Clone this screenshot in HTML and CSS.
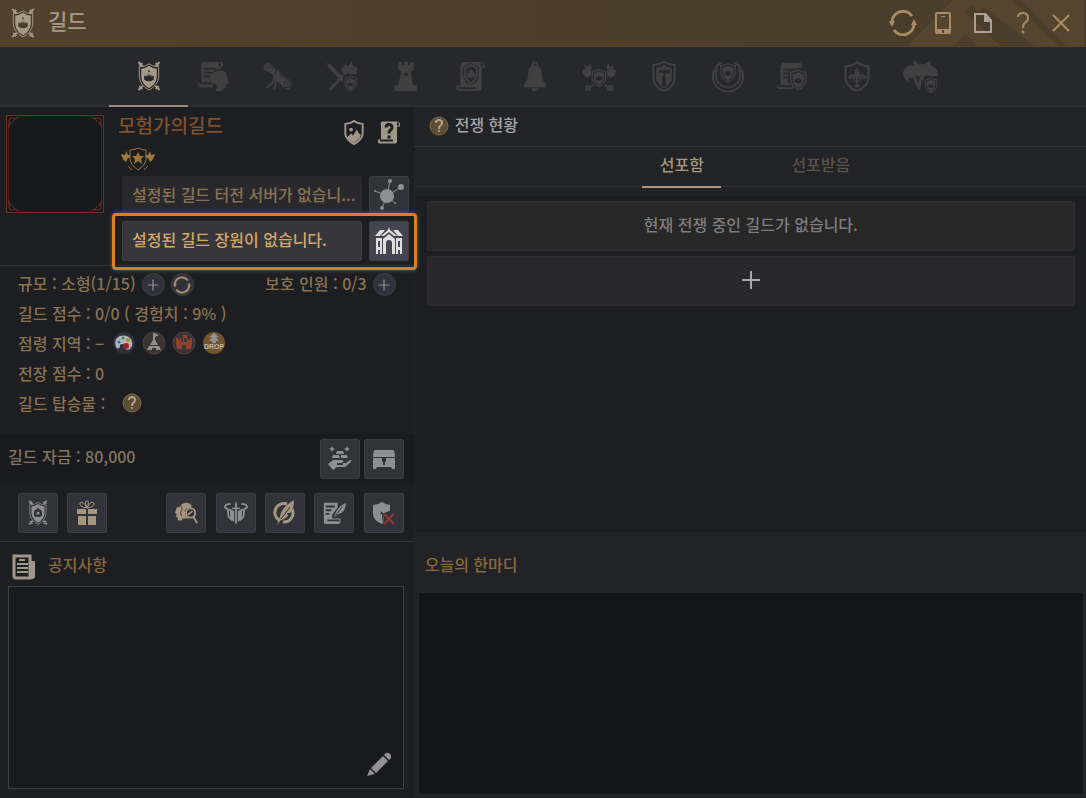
FILE: index.html
```
<!DOCTYPE html>
<html lang="ko">
<head>
  <meta charset="UTF-8">
  <title>길드</title>
  <meta name="viewport" content="width=device-width, initial-scale=1">
  <link rel="stylesheet" href="styles.css">
</head>
<body>
  <svg class="sprite" aria-hidden="true">
    <symbol id="shield" viewBox="0 0 24 28">
      <path class="line" d="M12 1Q8 4 2 4V14Q3 22 12 27Q21 22 22 14V4Q16 4 12 1Z"/>
      <path d="M12 4Q8 6.5 4.500 6.5V14Q5.500 20.5 12 24.500Q18.500 20.5 19.500 14V6.5Q16 6.5 12 4Z"/>
    </symbol>
    <symbol id="shield-crown" viewBox="0 0 24 28">
      <use href="#shield" width="24" height="28"/>
      <path class="cut" d="M7 12l2 2 1-3 1.5 2L12 10l.5 3 1.5-2 1 3 2-2-.5 5q-4.500 2-9 0z"/>
    </symbol>
    <symbol id="guild" viewBox="0 0 24 32">
      <path class="line" d="M1 1l5 5M2 5l3-3M23 1l-5 5M22 5l-3-3M1 30l5-5M2 26l3 3M23 30l-5-5M22 26l-3 3"/>
      <path class="cut" d="M12 1Q8 5 2 6V17Q3 26 12 32Q21 26 22 17V6Q16 5 12 1Z"/>
      <path class="line thin" d="M12 3Q8 6 2 6V17Q3 25 12 30Q21 25 22 17V6Q16 6 12 3Z"/>
      <path d="M12 5Q8 8 4 8V17Q5 24 12 28Q19 24 20 17V8Q16 8 12 5Z"/>
      <path class="cut" d="M7 15l2 1 1-2 1 2 1-3 1 3 1-2 1 2 2-1v4q-5 4-10 0zM12 9l1 1.5-1 1.5-1-1.5z"/>
    </symbol>
    <symbol id="member" viewBox="0 0 32 32">
      <path d="M6 1h19q3 1 1 5H7v16h9v5H4q-4 0-4-5h4V5q0-4 2-4z"/>
      <path d="M7 5h17v18H7z"/>
      <path class="cut-line" d="M7 8h12M7 12h9M7 16h6M2 23h13M23 2v3"/>
      <path class="cut" d="M17 11q6-5 13-2l2 20-8 3-6-2z"/>
      <path d="M23 10q6-1 7 4 0 2 1 4l1 4q0 2-2 2l-1 4-3 1v2h-7l1-5q-6-4-5-9 1-7 8-7z"/>
    </symbol>
    <symbol id="scroll-roll" viewBox="0 0 32 32">
      <path d="M1 8q0-6 6-6l7 7-3 6-10-6zM15 10l15 11q2 7-5 9L11 17z"/>
      <path class="cut-line thin" d="M1 9l9 5M6 4l6 5M18 14l9 6"/>
      <circle class="cut" cx="26" cy="24" r="4"/>
      <circle class="line" cx="26" cy="24" r="2"/>
      <path class="line" d="M17 9l-6 8M12 15q2 6-8 13M12 16q3 7 0 13"/>
    </symbol>
    <symbol id="war" viewBox="0 0 32 32">
      <path d="M0 2l4 1 17 18-2 3L3 8zM2 29l18-19 2 2L4 31zM15 8l5-5 2 3 4-6 1 5 5 2-1 6-7 2-3-5-4 3z"/>
      <path class="cut" d="M17 14h15v18H17z"/>
      <use href="#shield-crown" x="18" y="15" width="14" height="17"/>
    </symbol>
    <symbol id="tower" viewBox="0 0 24 32">
      <path d="M4 1h4v3h2V1h4v3h2V1h4v8l-3 2 2 14h4v6H0v-6h4l3-14-3-2z"/>
      <circle class="cut" cx="12" cy="14" r="2"/>
    </symbol>
    <symbol id="charter" viewBox="0 0 32 32">
      <path d="M7 1h20q4 0 3 6h-3v20q0 4-4 4H4q-4 0-3-6h4V5q0-3 2-4z"/>
      <path class="cut-line" d="M3 28h18M27 2v4"/>
      <path class="cut" d="M16 2l8 4v10q-1 6-8 9-7-3-8-9V6z"/>
      <path class="line" d="M16 4l6 3v8q-1 5-6 8-5-3-6-8V7z"/>
      <path d="M12 12l2 1v-2l2-3 2 3v2l2-1v5h-8z"/>
    </symbol>
    <symbol id="bell" viewBox="0 0 24 32">
      <circle class="line" cx="12" cy="4" r="2.500"/>
      <path d="M12 5q7 0 7 8 0 8 4 10v4H1v-4q4-2 4-10 0-8 7-8zM8 28h8q-1 3-4 3t-4-3z"/>
    </symbol>
    <symbol id="axes" viewBox="0 0 36 32">
      <path d="M1 9q6-1 8-7l3 9-5 6q-6-2-6-8zM35 9q-6-1-8-7l-3 9 5 6q6-2 6-8z"/>
      <path class="line" d="M4 5l6 6M32 5l-6 6M12 24l-5 4M24 24l5 4"/>
      <circle class="line" cx="7" cy="27" r="2"/>
      <circle class="line" cx="29" cy="27" r="2"/>
      <path class="cut" d="M10 7h16v14l-8 6-8-6z"/>
      <use href="#shield-crown" x="10" y="7" width="16" height="20"/>
    </symbol>
    <symbol id="hammer" viewBox="0 0 24 32">
      <path class="line" d="M12 1Q7 4 1 4V18Q2 27 12 31Q22 27 23 18V4Q17 4 12 1Z"/>
      <path d="M12 4Q8 7 4 7V18Q5 24 12 28Q19 24 20 18V7Q16 7 12 4Z"/>
      <path class="cut" d="M7 9h11v4h-4l-1 2h-2v-3H6zM10 16h4v10h-4z"/>
    </symbol>
    <symbol id="aura" viewBox="0 0 36 36">
      <path class="line" d="M11 3A16 16 0 1 0 25 3"/>
      <path class="line" d="M7 9a13 13 0 1 0 22 0"/>
      <use href="#shield-crown" x="9" y="2" width="18" height="23"/>
    </symbol>
    <symbol id="scroll-shield" viewBox="0 0 32 32">
      <path d="M6 2h19q3 2 1 6H8v17h9v4H4q-4 0-4-4h4V6q0-3 2-4z"/>
      <path d="M6 7h10v18H6z"/>
      <path class="cut-line" d="M7 9h9M7 13h5M7 17h5M2 26h14"/>
      <path class="cut" d="M22 7h10v22l-9 2-11-9V11z"/>
      <use href="#shield-crown" x="13" y="8" width="19" height="23"/>
    </symbol>
    <symbol id="lily" viewBox="0 0 24 30">
      <path class="line" d="M12 1Q8 5 1 5V17Q2 25 12 29Q22 25 23 17V5Q16 5 12 1Z"/>
      <path d="M12 6q5 6 1 11v2h3v1h-3v2l2 2-3 2-3-2 2-2v-2H8v-1h3v-2q-4-5 1-11zM10 18q0-6-4-5-4 2-1 5l2-1q-2-1 0-2 1 0 1 3zM14 18q0-6 4-5 4 2 1 5l-2-1q2-1 0-2-1 0-1 3z"/>
    </symbol>
    <symbol id="helmet" viewBox="0 0 34 32">
      <path d="M10 5V0l5 4h6l5-4v5q8 3 7 11l-1 4-5-4-9 3-2 9q-5-3-6-11l-3-1q-3 2-1 6-6-4-6-10 1-6 8-7z"/>
      <path class="cut" d="M11 14l5 2-1 6zM20 15h13v17H20z"/>
      <use href="#shield-crown" x="20" y="16" width="13" height="16"/>
    </symbol>
    <symbol id="refresh" viewBox="0 0 28 26">
      <path class="line thick" d="M3 12A11 11 0 0 1 23 6M25 14A11 11 0 0 1 5 20"/>
      <path d="M0 11h6l-3 6zM22 15h6l-3-6z"/>
    </symbol>
    <symbol id="question" viewBox="0 0 12 22">
      <path class="line" d="M1 5q0-4 5-4t5 5q0 3-3 5-2 1-2 5"/>
      <circle cx="6" cy="20" r="1.5"/>
    </symbol>
    <symbol id="plus" viewBox="0 0 20 20">
      <path class="line" d="M10 1v18M1 10h18"/>
    </symbol>
    <symbol id="help" viewBox="0 0 20 20">
      <circle class="disc" cx="10" cy="10" r="9"/>
      <path class="line" d="M7 7q0-3 3-3t3 3q0 2-2 3-1 1-1 3"/>
      <circle cx="10" cy="15" r="1"/>
    </symbol>
    <symbol id="faces" viewBox="0 0 26 24">
      <path d="M3 6l4-1q1-4 7-4 6 1 5 6l1 6-4 2v3H9v2H4v-3l-2-1 1-3-2-1 1-3z"/>
      <path class="cut-line thin" d="M8 5l1 4-2 2 1 4M14 7l-2 3 2 4"/>
      <circle class="cut" cx="18" cy="12" r="6"/>
      <circle class="line" cx="18" cy="12" r="5"/>
      <path class="line" d="M21 16l4 7M15 14l5-4"/>
    </symbol>
  </svg>

  <div class="guild-window">
    <header class="title-bar">
      <svg class="stripes" viewBox="0 0 186 47" aria-hidden="true">
        <path d="M5 47L52 0h25L30 47zM30 47l35-35 35 35H77L65 35 53 47zM71 5l5-5h37l47 47h-24L84 8l-6 4zM121 0h65v47h-18z"/>
      </svg>
      <svg class="guild-icon"><use href="#guild"/></svg>
      <h1>길드</h1>
      <div class="window-tools">
        <button aria-label="새로고침"><svg class="w28"><use href="#refresh"/></svg></button>
        <button aria-label="모바일"><svg class="w16" viewBox="0 0 16 22"><path fill-rule="evenodd" d="M2 0h12q2 0 2 2v18q0 2-2 2H2q-2 0-2-2V2q0-2 2-2zM2 2v15h12V2zM6 4h4v1H6zM7 18v3h2v-3z"/></svg></button>
        <button aria-label="문서" class="pale"><svg class="w18" viewBox="0 0 18 20"><path fill-rule="evenodd" d="M0 0h12l6 7v13H0zM2 2v16h14V9h-6V2z"/></svg></button>
        <button aria-label="도움말"><svg class="w12"><use href="#question"/></svg></button>
        <button aria-label="닫기"><svg class="w18" viewBox="0 0 18 18"><path class="line" d="M1 1l16 16M17 1L1 17"/></svg></button>
      </div>
    </header>

    <nav class="main-tabs">
      <button class="active" aria-label="길드 정보"><svg><use href="#guild"/></svg></button>
      <button aria-label="길드원"><svg><use href="#member"/></svg></button>
      <button aria-label="의뢰"><svg><use href="#scroll-roll"/></svg></button>
      <button aria-label="전쟁"><svg><use href="#war"/></svg></button>
      <button aria-label="거점"><svg><use href="#tower"/></svg></button>
      <button aria-label="길드 증서"><svg><use href="#charter"/></svg></button>
      <button aria-label="알림"><svg><use href="#bell"/></svg></button>
      <button aria-label="전투"><svg class="wide"><use href="#axes"/></svg></button>
      <button aria-label="제작"><svg><use href="#hammer"/></svg></button>
      <button aria-label="기술"><svg class="wide"><use href="#aura"/></svg></button>
      <button aria-label="기록"><svg><use href="#scroll-shield"/></svg></button>
      <button aria-label="연합"><svg><use href="#lily"/></svg></button>
      <button aria-label="용병"><svg class="wide"><use href="#helmet"/></svg></button>
    </nav>

    <main class="content">
      <div class="left">
        <section class="profile">
          <svg class="emblem" viewBox="0 0 98 98" aria-label="길드 문장">
            <rect class="frame" x="0.500" y="0.500" width="97" height="97"/>
            <path class="frame soft" d="M2.500 8v82M95.500 8v82"/>
            <path class="frame" d="M2 13q3-3 1-7 0-3 3-3 4 2 7-1M3 10l7-7M85 2q3 3 7 1 3 0 3 3-2 4 1 7M95 10l-7-7M2 85q3 3 1 7 0 3 3 3 4-2 7 1M3 88l7 7M85 96q3-3 7-1 3 0 3-3-2-4 1-7M95 88l-7 7"/>
          </svg>
          <div class="info">
            <div class="info-head">
              <div>
                <h2>모험가의길드</h2>
                <svg class="rank" viewBox="0 0 34 24" aria-label="길드 등급">
                  <path d="M0 7l4 1 1-4 2 4h2v3H7l-2 4q-4-3-5-8zM34 7l-4 1-1-4-2 4h-2v3h2l2 4q4-3 5-8z"/>
                  <path class="line thin" d="M17 1q-4 2-8 2v10q1 6 8 10 7-4 8-10V3q-4 0-8-2zM7 19l4 4M27 19l-4 4"/>
                  <path d="M17 5l2 4h4l-3 3 1 5-4-3-4 3 1-5-3-3h4z"/>
                </svg>
              </div>
              <div class="info-tools">
                <button aria-label="문장 변경"><svg viewBox="0 0 20 26"><path class="line" d="M10 1Q6 4 1 4v11q1 6 9 10 8-4 9-10V4q-5 0-9-3z"/><circle cx="7" cy="10" r="2"/><path d="M3 18l4-4 2 2 4-6 2 4 2 1-1 4-6 5-5-3z"/></svg></button>
                <button aria-label="길드 안내"><svg viewBox="0 0 22 24"><path d="M4 1h16q3 1 2 5h-3v13q1 4-3 4H1q-2-1-1-4h3V5q-1-3 1-4z"/><path class="cut-line" d="M2 20h13M20 2v3"/><path class="cut-line thick" d="M8 7q0-3 3-3t3 3q0 2-2 3-1 1-1 3M11 15v3"/></svg></button>
              </div>
            </div>
            <div class="place">
              <p>설정된 길드 터전 서버가 없습니...</p>
              <button class="tile" aria-label="터전 서버"><svg viewBox="0 0 30 32"><circle cx="13" cy="17" r="7"/><circle cx="27" cy="8" r="3"/><circle cx="16" cy="2" r="2"/><circle cx="8" cy="29" r="2"/><circle cx="1" cy="12" r="1"/><circle cx="21" cy="24" r="1"/><path class="line thin" d="M13 17L27 8M13 17l3-15M13 17L8 29M13 17L1 12M13 17l8 7"/></svg></button>
            </div>
            <div class="place selected">
              <p>설정된 길드 장원이 없습니다.</p>
              <button class="tile" aria-label="장원"><svg viewBox="0 0 28 28"><path d="M14 0l1 3 6 5 1 1h-3l-5-4-5 4H6l7-6zM5 3h5L5 9H0zM18 3h5l5 6h-5zM1 11h6v16H5v-4H3v4H1zM21 11h6v16h-2v-4h-2v4h-2zM8 12l6-5 6 5v15h-3V16q0-3-3-3t-3 3v11H8z"/><path class="cut" d="M3 14h2v6H3zM23 14h2v6h-2z"/></svg></button>
            </div>
          </div>
        </section>

        <section class="stats">
          <div class="stat">
            <span>규모 : 소형(1/15)</span>
            <button class="round" aria-label="규모 확장"><svg class="w12 bold"><use href="#plus"/></svg></button>
            <button class="round gold" aria-label="규모 갱신"><svg class="w18"><use href="#refresh"/></svg></button>
            <span class="push">보호 인원 : 0/3</span>
            <button class="round near" aria-label="보호 인원 추가"><svg class="w12 bold"><use href="#plus"/></svg></button>
          </div>
          <div class="stat"><span>길드 점수 : 0/0 ( 경험치 : 9% )</span></div>
          <div class="stat areas">
            <span>점령 지역 : −</span>
            <svg class="area" viewBox="0 0 24 24"><circle class="dark" cx="12" cy="12" r="11"/><path class="palette" d="M4 16Q1 8 8 5q7-2 11 3 3 6-1 10-4 2-5-1 0-4-3-4-3 1-2 3-2 3-4 0z"/><circle class="blue" cx="7" cy="11" r="1.5"/><circle class="green" cx="11" cy="7" r="1.5"/><circle class="yellow" cx="16" cy="9" r="2"/><circle class="red" cx="14" cy="15" r="3"/></svg>
            <svg class="area" viewBox="0 0 24 24"><circle class="brown" cx="12" cy="12" r="11"/><path d="M12 2l5 2-4 2v3l3 5H8l3-5V2zM7 15h10l2 4h-5v-2h-4v2H5z"/></svg>
            <svg class="area" viewBox="0 0 24 24"><circle class="brown" cx="12" cy="12" r="11"/><path class="castle" d="M4 7h2v2h2V7h1v4h2V4h4v3h-3v4h3V7h1v2h2V7h2v5l-1 6h-5v-3q-2-3-4 0v3H5l-1-6z"/></svg>
            <svg class="area" viewBox="0 0 24 24"><circle class="drop" cx="12" cy="12" r="11"/><path d="M12 2l5 4h-3l3 4h-3v2h-4v-2H7l3-4H7z"/><text x="12" y="18" text-anchor="middle">DROP</text></svg>
          </div>
          <div class="stat"><span>전장 점수 : 0</span></div>
          <div class="stat mount">
            <span>길드 탑승물 :</span>
            <button class="help" aria-label="탑승물 도움말"><svg><use href="#help"/></svg></button>
          </div>
        </section>

        <section class="funds">
          <span>길드 자금 : 80,000</span>
          <button class="tile" aria-label="자금 받기"><svg viewBox="0 0 24 26"><path d="M9 5h6l1 3H8zM5 9h6l1 3H4zM13 9h6l1 3h-7zM0 18l5-4h9q3 1 0 3h4l4-3q2 0 1 2l-6 5H9l-4 3zM4 0l1 2 2 1-2 1-1 2-1-2-2-1 2-1zM19 0l1 2 2 1-2 1-1 2-1-2-2-1 2-1z"/><path class="cut-line" d="M9 18h6"/></svg></button>
          <button class="tile" aria-label="길드 창고"><svg viewBox="0 0 24 24"><path d="M3 3h18q2 1 2 7H1q0-6 2-7zM1 11h22v11h-3l-1-2H5l-1 2H1z"/><path class="cut" d="M10 11h4v3l-1 1v3h-2v-3l-1-1z"/></svg></button>
        </section>

        <section class="actions">
          <button class="tile" aria-label="길드 방어"><svg viewBox="0 0 24 32"><use href="#guild" width="24" height="32"/><circle class="cut" cx="12" cy="16" r="5"/><circle cx="12" cy="16" r="2"/></svg></button>
          <button class="tile cream" aria-label="선물"><svg viewBox="0 0 22 26"><path d="M1 9h9v5H1zM12 9h9v5h-9zM2 16h8v9H2zM12 16h8v9h-8z"/><path class="line thin" d="M11 8Q7 0 4 3q-1 4 7 5zM11 8q4-8 7-5 1 4-7 5zM11 8q-3-7 0-7t0 7"/></svg></button>
          <button class="tile cream group" aria-label="길드원 찾기"><svg><use href="#faces"/></svg></button>
          <button class="tile" aria-label="길드 무기"><svg viewBox="0 0 26 26"><path d="M13 0l1 3v4h3v2h-3v14l-1 3-1-3V9H9V7h3V3zM6 8l5 3v12l-4-4zM20 8l-5 3v12l4-4z"/><path class="line" d="M7 3L2 4 1 7l5 3M4 10l1 7 4 4M19 3l5 1 1 3-5 3M22 10l-1 7-4 4"/></svg></button>
          <button class="tile cream" aria-label="깃털"><svg viewBox="0 0 24 26"><path class="line thick" d="M14 4A9 9 0 0 0 6 20M19 9a9 9 0 0 1-9 13"/><path d="M21 0q0 9-4 13h-3l1 3q-4 4-7 4l-4 5 3-9q2-9 14-16z"/><path class="cut-line thin" d="M17 7l-9 12"/></svg></button>
          <button class="tile" aria-label="계약서"><svg viewBox="0 0 26 26"><path d="M2 2h15v5l-6 8v4h9v4q-1 2-3 2H4q-2 0-2-2z"/><path class="cut-line" d="M4 6h10M4 10h6M4 14h4M6 21h13"/><path d="M26 2q-1 11-8 12l-5 4q2-11 13-16z"/><path class="cut-line thin" d="M22 6l-8 11"/></svg></button>
          <button class="tile" aria-label="길드 탈퇴"><svg viewBox="0 0 24 26"><path d="M10 2Q6 5 1 5v9q0 6 9 10 8-4 8-10V5q-4 0-8-3z"/><path class="cut" d="M10 4v8l2 2-2 8V14H8l2-3zM12 13l8-3 3 14H11z"/><path class="cross" d="M12 14l10 10M22 14L12 24"/></svg></button>
        </section>

        <section class="notice">
          <label class="notice-title" for="noticeText">
            <svg viewBox="0 0 24 26"><path class="line thick" d="M2 2h16v22H4q-2 0-2-2z"/><path d="M19 7h4v15q0 3-3 3h-4l3-3z"/><path class="line" d="M7 6h6M5 10h11M5 14h11M5 18h11"/></svg>
            공지사항
          </label>
          <div class="notice-box">
            <textarea id="noticeText" readonly></textarea>
            <button class="edit" aria-label="공지 수정"><svg viewBox="0 0 24 24"><path d="M17 3l2-2q2-1 4 1t1 4l-2 2zM4 16L16 4l5 5L9 21zM0 24l3-7 5 5z"/></svg></button>
          </div>
        </section>
      </div>

      <div class="right">
        <div class="war-title">
          <button class="help" aria-label="전쟁 도움말"><svg><use href="#help"/></svg></button>
          <h2>전쟁 현황</h2>
        </div>
        <div class="war-tabs">
          <button class="active">선포함</button>
          <button>선포받음</button>
        </div>
        <div class="war-list">
          <p>현재 전쟁 중인 길드가 없습니다.</p>
          <button aria-label="전쟁 선포"><svg><use href="#plus"/></svg></button>
        </div>
        <h2 class="talk-title">오늘의 한마디</h2>
        <div class="talk"></div>
      </div>
    </main>
  </div>
</body>
</html>
```
FILE: styles.css
```
* {
  box-sizing: border-box;
}
body {
  margin: 0;
  background: #1d1e22;
  color: #8a7251;
  font-family: "Noto Sans CJK KR", sans-serif;
  font-size: 16px;
  font-weight: 500;
  line-height: 24px;
}
h1, h2, p {
  margin: 0;
  font-weight: 500;
}
h2 {
  font-size: 16px;
}
button {
  display: flex;
  align-items: center;
  justify-content: center;
  margin: 0;
  padding: 0;
  border: 0;
  background: none;
  color: inherit;
  font: inherit;
  cursor: pointer;
}
svg {
  display: block;
  flex: none;
  fill: currentColor;
  --cut: #1d1e22;
}
.sprite {
  position: absolute;
  width: 0;
  height: 0;
}
.line {
  fill: none;
  stroke: currentColor;
  stroke-width: 2;
}
.cut {
  fill: var(--cut);
}
.cut-line {
  fill: none;
  stroke: var(--cut);
  stroke-width: 2;
}
.thick {
  stroke-width: 3;
}
.thin {
  stroke-width: 1;
}
.w12 { width: 12px; height: 22px; }
.w16 { width: 16px; height: 22px; }
.w18 { width: 18px; height: 20px; }
.w28 { width: 28px; height: 26px; }

.guild-window {
  display: flex;
  flex-direction: column;
  min-height: 100vh;
}

/* title bar */
.title-bar {
  position: relative;
  display: flex;
  align-items: center;
  height: 47px;
  padding: 0 16px 0 11px;
  background: linear-gradient(90deg, #52412d, #4b3d2b 70%);
  border-bottom: 1px solid #594329;
  color: #a59987;
}
.title-bar svg {
  --cut: #4e3f2c;
}
.stripes {
  position: absolute;
  top: 0;
  right: 0;
  width: 186px;
  height: 46px;
  fill: #56452e;
}
.guild-icon {
  width: 24px;
  height: 31px;
}
.title-bar h1 {
  margin-left: 13px;
  padding-bottom: 6px;
  font-size: 21px;
  line-height: 40px;
}
.window-tools {
  position: relative;
  display: flex;
  align-items: center;
  margin-left: auto;
  color: #a98c63;
}
.window-tools button {
  width: 40px;
  height: 40px;
}
.window-tools button:last-child {
  width: 18px;
  margin-left: 9px;
}
.window-tools .pale {
  color: #aaa194;
}

/* main tabs */
.main-tabs {
  display: grid;
  grid-template-columns: repeat(13, 1fr);
  height: 60px;
  padding: 0 133px 0 117px;
  background: #27282c;
  border-bottom: 1px solid #303136;
  color: #404041;
}
.main-tabs svg {
  width: 32px;
  height: 31px;
  --cut: #27282c;
}
.main-tabs .wide {
  width: 36px;
  height: 34px;
}
.main-tabs .active {
  position: relative;
  color: #a59987;
}
.main-tabs .active::after {
  content: "";
  position: absolute;
  left: -8px;
  right: -7px;
  bottom: -1px;
  height: 2px;
  background: #9a8d80;
}

.content {
  flex: 1;
  display: grid;
  grid-template-columns: 8fr 13fr;
}
.left, .right {
  display: flex;
  flex-direction: column;
  min-width: 0;
}
.left {
  background: #1d1e22;
}
.right {
  background: #222327;
}

/* profile */
.profile {
  display: flex;
  gap: 14px;
  padding: 8px 5px 4px 6px;
  border-bottom: 1px solid #34353a;
}
.emblem {
  width: 98px;
  height: 98px;
  background: #18191c;
}
.frame {
  fill: none;
  stroke: #752d20;
  stroke-width: 1;
}
.soft {
  stroke: #4a221d;
}
.info {
  flex: 1;
  min-width: 0;
}
.info-head {
  display: flex;
  justify-content: space-between;
  height: 61px;
}
.info h2 {
  color: #80502f;
  font-size: 19px;
  line-height: 20px;
}
.rank {
  width: 34px;
  height: 24px;
  margin: 12px 0 0 3px;
  color: #9a773c;
}
.info-tools {
  display: flex;
  align-items: flex-start;
  gap: 13px;
  padding: 5px 9px 0 0;
  color: #a19788;
}
.info-tools svg {
  width: 22px;
  height: 25px;
}
.place {
  display: flex;
  gap: 7px;
  height: 37px;
  margin-left: 4px;
}
.place p {
  flex: 1;
  min-width: 0;
  padding-left: 10px;
  overflow: hidden;
  white-space: nowrap;
  line-height: 36px;
  background: #29292d;
  border-radius: 2px;
}
.place .tile {
  height: auto;
}
.place .tile svg {
  width: 30px;
  height: 32px;
}
.selected {
  position: relative;
  height: 40px;
  margin-top: 8px;
  color: #d5a869;
}
.selected p {
  background: #37363b;
  border: 1px solid #3f3f44;
  line-height: 34px;
  padding-left: 9px;
}
.selected .tile {
  background: #454551;
  color: #dededf;
}
.place.selected .tile svg {
  width: 28px;
  height: 28px;
  --cut: #454551;
}
.selected::before {
  content: "";
  position: absolute;
  inset: -8px -8px -9px -10px;
  border: 3px solid #d9821b;
  border-radius: 4px;
  box-shadow: 0 0 4px #5d6268;
  pointer-events: none;
}

.tile {
  width: 40px;
  height: 40px;
  background: #32323a;
  border: 1px solid #3c3c43;
  border-radius: 2px;
  color: #8e8f92;
}
.tile svg {
  width: 24px;
  height: 26px;
  --cut: #32323a;
}
.cream {
  color: #a59680;
}

/* stats */
.stats {
  padding: 2px 18px 16px 18px;
}
.stat {
  display: flex;
  align-items: center;
  height: 30px;
}
.stat span {
  padding-bottom: 1px;
}
.round {
  width: 23px;
  height: 23px;
  margin-top: 3px;
  margin-left: 6px;
  border: 1px solid #3f4048;
  border-radius: 50%;
  background: #30313a;
  color: #919193;
}
.bold .line, .bold {
  stroke-width: 3;
}
.gold {
  color: #a88c63;
}
.stat .push {
  margin-left: auto;
}
.areas {
  gap: 6px;
  color: #909193;
}
.areas span {
  margin-right: 2px;
  color: #8a7251;
}
.area {
  width: 24px;
  height: 24px;
}
.area text {
  font: bold 7px "Liberation Sans", sans-serif;
  fill: #b9b6ae;
}
.dark { fill: #30313b; }
.brown { fill: #3d3331; stroke: #4d4541; }
.drop { fill: #71542c; }
.palette { fill: #b1b4ba; }
.blue { fill: #356c9e; }
.green { fill: #43854a; }
.yellow { fill: #b58b2d; }
.red { fill: #a51f29; }
.castle { fill: #98402f; }
.cross {
  fill: none;
  stroke: #8e3d2f;
  stroke-width: 2;
}
.help {
  width: 20px;
  height: 20px;
  color: #b2a087;
}
.help svg {
  width: 20px;
  height: 20px;
}
.help svg, .info-tools svg {
  stroke-width: 1;
}
.disc {
  fill: #5d4c36;
  stroke: #806640;
}
.mount {
  gap: 17px;
}

/* funds and actions */
.funds {
  display: flex;
  align-items: center;
  gap: 4px;
  height: 49px;
  padding: 0 10px 0 8px;
  background: #191a1d;
  color: #837562;
}
.funds span {
  margin-right: auto;
  padding-bottom: 6px;
}
.actions {
  display: grid;
  grid-template-columns: repeat(8, 40px);
  justify-content: space-between;
  padding: 10px 10px 8px 18px;
  border-bottom: 1px solid #35363a;
}
.group {
  grid-column: 4;
}

/* notice */
.notice {
  flex: 1;
  display: flex;
  flex-direction: column;
  padding: 0 10px 9px 8px;
}
.notice-title {
  display: flex;
  align-items: center;
  gap: 12px;
  height: 44px;
  padding-left: 4px;
  color: #8b683a;
}
.notice-title svg {
  width: 24px;
  height: 26px;
  margin-top: 5px;
  color: #a19788;
}
.notice-box {
  position: relative;
  flex: 1;
  display: flex;
  min-height: 120px;
}
.notice textarea {
  flex: 1;
  width: 100%;
  padding: 10px;
  resize: none;
  border: 1px solid #404040;
  background: #191a1d;
  color: inherit;
  font: inherit;
}
.edit {
  position: absolute;
  right: 13px;
  bottom: 13px;
  color: #929294;
}
.edit svg {
  width: 24px;
  height: 24px;
}

/* war status */
.war-title {
  display: flex;
  align-items: center;
  gap: 6px;
  height: 40px;
  padding: 0 15px 5px;
  border-bottom: 1px solid #34353a;
  color: #a3a3a4;
}
.war-title .help {
  margin-top: 3px;
}
.war-tabs {
  display: flex;
  justify-content: center;
  gap: 60px;
  height: 40px;
  padding-left: 3px;
  border-bottom: 1px solid #2d2e32;
  color: #5c5349;
}
.war-tabs button {
  width: 79px;
  height: 41px;
  padding-bottom: 6px;
  border-bottom: 2px solid transparent;
}
.war-tabs .active {
  color: #a79784;
  border-color: #a79784;
}
.war-list {
  display: flex;
  flex-direction: column;
  gap: 5px;
  min-height: 336px;
  margin: 9px 0 0 1px;
  padding: 5px 11px 5px 12px;
  background: #1d1e22;
}
.war-list p, .war-list button {
  height: 50px;
  border: 1px solid #2e2e32;
  border-radius: 2px;
}
.war-list p {
  background: #272728;
  color: #7d7d7e;
  text-align: center;
  line-height: 44px;
}
.war-list button {
  padding-bottom: 2px;
  background: #28282d;
  color: #aaaaab;
}
.war-list svg {
  width: 20px;
  height: 20px;
}
.talk-title {
  padding: 20px 11px 16px;
  color: #8b683a;
}
.talk {
  flex: 1;
  min-height: 120px;
  margin: 0 2px 3px 4px;
  background: #141519;
  border: 1px solid #25262a;
}
```
